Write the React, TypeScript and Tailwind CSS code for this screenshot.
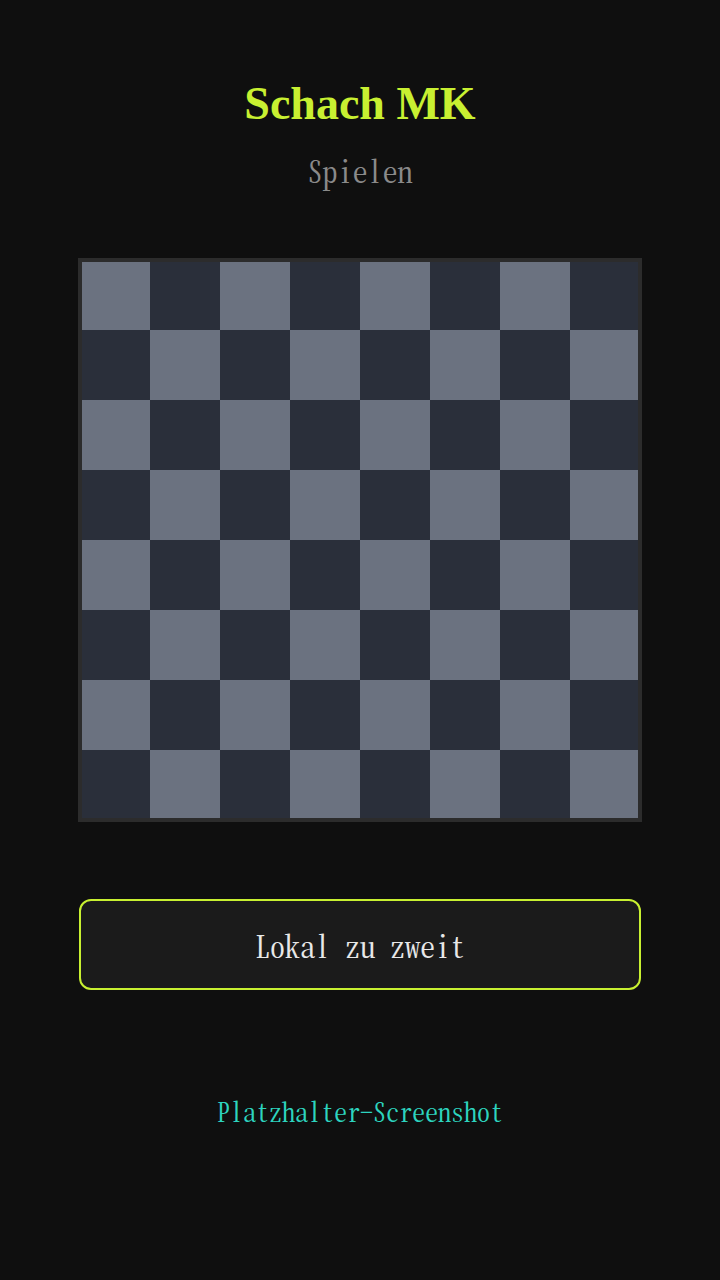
const LIGHT = 'bg-[#6b7280]';
const DARK = 'bg-[#2a2f3a]';

function Board() {
  const cells = [];
  for (let r = 0; r < 8; r++) {
    for (let c = 0; c < 8; c++) {
      cells.push(<div key={`${r}-${c}`} className={`w-[70px] h-[70px] ${(r + c) % 2 === 0 ? LIGHT : DARK}`} />);
    }
  }
  return (
    <div className="grid grid-cols-8 w-[560px] h-[560px] outline-4 outline-[#2c2c2c] -outline-offset-2">
      {cells}
    </div>
  );
}

export default function App() {
  return (
    <div className="min-h-screen bg-[#0f0f0f] flex flex-col items-center">
      <h1 className="mt-[81px] text-[46px] leading-none font-bold text-[#c8f031] font-['Liberation_Serif',serif]">
        Schach MK
      </h1>
      <p className="mt-[28px] text-[30px] leading-none text-[#8a8a8a] font-['Noto_Serif_CJK_JP',serif] [font-feature-settings:'hwid']">
        Spielen
      </p>
      <div className="mt-[75px]">
        <Board />
      </div>
      <button className="mt-[79px] w-[562px] h-[91px] rounded-xl border-2 border-[#c8f031] bg-[#1b1b1b] text-[30px] leading-none text-[#e8e8e8] font-['Noto_Serif_CJK_JP',serif] [font-feature-settings:'hwid']">
        Lokal zu zweit
      </button>
      <p className="mt-[108px] text-[26px] leading-none text-[#2dd4bf] font-['Noto_Serif_CJK_JP',serif] [font-feature-settings:'hwid']">
        Platzhalter-Screenshot
      </p>
    </div>
  );
}
